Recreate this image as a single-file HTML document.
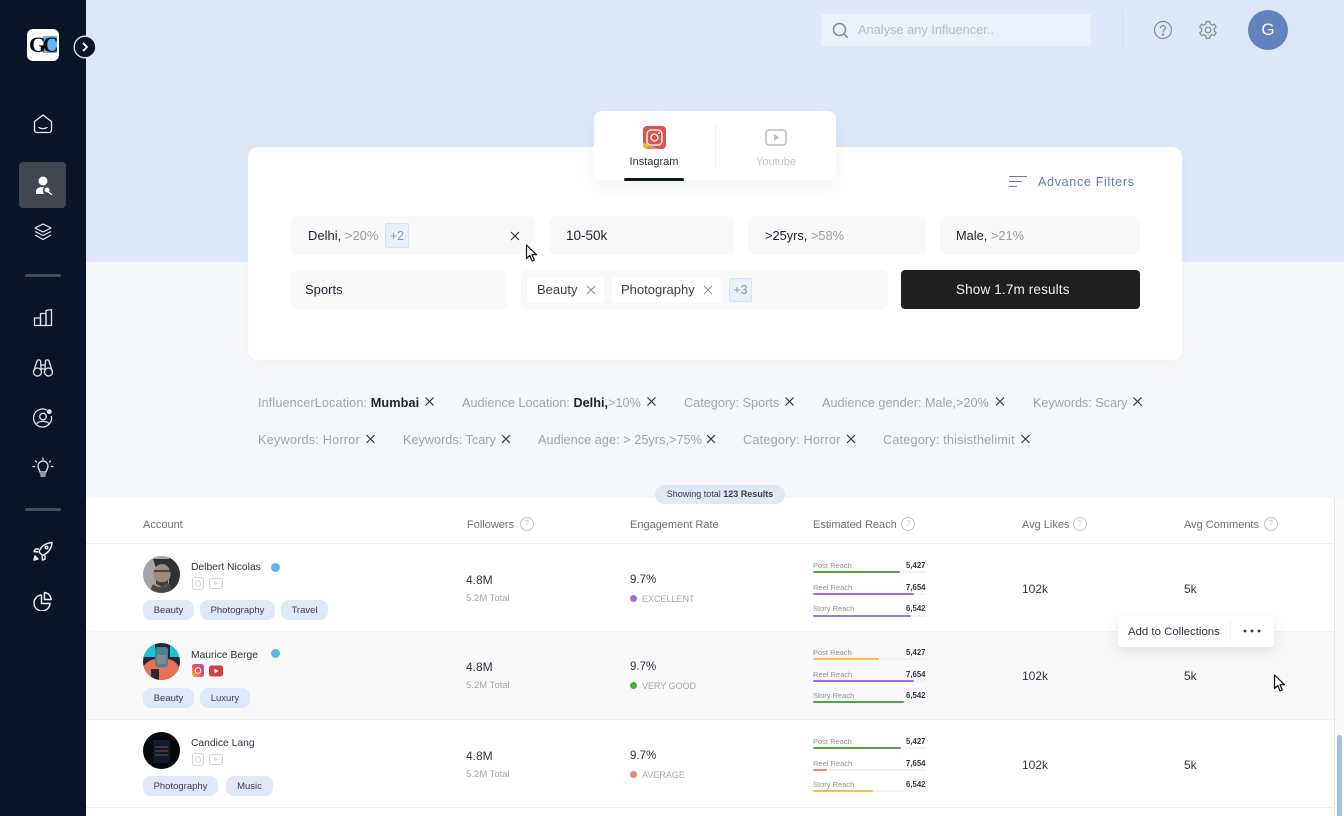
<!DOCTYPE html>
<html><head><meta charset="utf-8">
<style>
html,body{margin:0;padding:0;width:1344px;height:816px;overflow:hidden;background:#f6f7fa}
body{position:relative;font-family:"Liberation Sans",sans-serif;color:#2b303b}
div,svg{position:absolute}
.t{position:absolute;white-space:nowrap;line-height:16px}
.f{background:#f9f9f9;border-radius:6px}
.tag{position:absolute;background:#dde8f8;border-radius:8px;height:20px;line-height:22px;font-size:9.5px;text-align:center;color:#3c4250}
.th{font-size:11px;color:#6d717a;transform:translateY(1px)}
.v{font-size:12px;color:#2f3440}
.p{font-size:11.5px;color:#2f3440;transform:translateY(1px)}
.s{font-size:9.5px;color:#a5a8ae;transform:translateY(1px)}
.e{font-size:9px;color:#a5a8ae}
.rl{font-size:7.5px;color:#8f9299;transform:translateY(1px)}
.rv{font-size:7.8px;font-weight:bold;color:#2f3440;transform:translateY(1px)}
.tr{position:absolute;left:813px;width:113px;height:2px;background:#f1f2f4;border-radius:1px}
.tr i{display:block;height:2px;border-radius:1px}
.fl{font-size:12.7px;color:#a2a5ab;transform:translateY(1px)}
.fl b{font-weight:bold;color:#1d2230}
.n{font-size:10.3px;color:#2f3440;transform:translateY(1px)}
.m{font-size:13px;color:#1d2230}
</style></head><body>

<div style="left:0;top:0;width:1344px;height:262px;background:#dce8f8"></div>
<div style="left:86px;top:262px;width:1258px;height:236px;background:#f6f7fa"></div>
<div style="left:86px;top:498px;width:1248px;height:318px;background:#fff"></div>
<div style="left:86px;top:632px;width:1248px;height:87px;background:#f9f9fa"></div>
<div style="left:86px;top:543px;width:1248px;height:1px;background:#eeeff2"></div>
<div style="left:86px;top:631px;width:1248px;height:1px;background:#f0f1f3"></div>
<div style="left:86px;top:719px;width:1248px;height:1px;background:#eeeff2"></div>
<div style="left:86px;top:807px;width:1248px;height:1px;background:#eeeff2"></div>
<div style="left:1334px;top:498px;width:10px;height:318px;background:#f9fafc;border-left:1px solid #e6e8ec;box-sizing:border-box"></div>
<div style="left:1337px;top:735px;width:5px;height:81px;background:#a9bcdc;border-radius:3px 3px 0 0"></div>

<!-- Sidebar -->
<div style="left:0;top:0;width:86px;height:816px;background:#0a1628"></div>
<div style="left:27px;top:29px;width:32px;height:32px;background:#fff;border-radius:6px"></div>
<div style="left:43px;top:36px;width:14px;height:17px;background:#62b7ee"></div>
<div class="t" style="left:29px;top:34px;font-family:'Liberation Serif',serif;font-weight:bold;font-size:22px;line-height:22px;letter-spacing:-3.5px;color:#0a0a0a">GC</div>
<svg style="left:73px;top:35px" width="24" height="24" viewBox="0 0 24 24"><circle cx="12" cy="12" r="10.8" fill="#0a1628" stroke="#dce8f8" stroke-width="1.3"/><path d="M10.5 8.5l3.500 3.500-3.500 3.500" fill="none" stroke="#fff" stroke-width="1.8" stroke-linecap="round" stroke-linejoin="round"/></svg>
<svg style="left:31px;top:112px" width="24" height="24" viewBox="0 0 24 24" fill="none" stroke="#e8ebf0" stroke-width="1.3" stroke-linejoin="round" stroke-linecap="round"><path d="M12 3L3.500 9.500V18c0 1.500 1 2.500 2.500 2.500h12c1.500 0 2.500-1 2.500-2.500V9.500z" /><path d="M8 15.500c2 1.500 6 1.500 8 0"/></svg>
<div style="left:19px;top:162px;width:47px;height:46px;background:#41464f;border-radius:4px"></div>
<svg style="left:33px;top:175px" width="20" height="20" viewBox="0 0 20 20"><circle cx="10" cy="6" r="4.5" fill="#fff"/><path d="M3 19v-2.500C3 13.500 6 12 9 12c1 0 1.500 .2 2 .4-1.500 2-1.500 4.600 .2 6.600z" fill="#fff"/><circle cx="14" cy="15" r="2.5" fill="#fff"/><path d="M15.500 17l3 2.500" stroke="#fff" stroke-width="1.4" stroke-linecap="round"/></svg>
<svg style="left:33px;top:222px" width="20" height="20" viewBox="0 0 20 20" fill="none" stroke="#e8ebf0" stroke-width="1.2" stroke-linejoin="round"><path d="M10 2l8 4-8 4-8-4z"/><path d="M2 9.500l8 4 8-4"/><path d="M2 13l8 4.500 8-4.500"/></svg>
<div style="left:25px;top:274px;width:36px;height:3px;background:#464c56;border-radius:2px"></div>
<svg style="left:33px;top:307px" width="20" height="20" viewBox="0 0 20 20" fill="none" stroke="#dfe3ea" stroke-width="1.3" stroke-linejoin="round"><rect x="1.5" y="11" width="6" height="7.5"/><rect x="7.5" y="6.5" width="5.5" height="12"/><path d="M13 18.500V3.500l5.500-1v16z"/></svg>
<svg style="left:32px;top:358px" width="22" height="20" viewBox="0 0 22 20" fill="none" stroke="#dfe3ea" stroke-width="1.3"><circle cx="5.5" cy="14" r="4"/><circle cx="16.5" cy="14" r="4"/><path d="M1.500 14L5 3c.5-1.500 3-1.500 3.500 0L9 11M20.500 14L17 3c-.5-1.500-3-1.500-3.500 0L13 11M9 7h4M9 11h4"/></svg>
<svg style="left:33px;top:408px" width="20" height="20" viewBox="0 0 20 20" fill="none" stroke="#dfe3ea" stroke-width="1.3"><path d="M14 2.200A9 9 0 1 0 18.300 8"/><circle cx="10" cy="8.5" r="3.3"/><path d="M3.800 16c1.500-3.500 10.500-3.500 12.400 0"/><circle cx="16.3" cy="3.7" r="1.8" fill="#dfe3ea"/></svg>
<svg style="left:32px;top:457px" width="22" height="22" viewBox="0 0 22 22" fill="none" stroke="#e3e6ec" stroke-width="1.3" stroke-linecap="round"><path d="M8 15c0-2-2-3-2-6a5 5 0 0 1 10 0c0 3-2 4-2 6z"/><path d="M8.500 17h5M9 19h4M11 1v1.500M3.500 4l1 1M18.500 4l-1 1M1 9.500h1.500M19.500 9.500H21"/></svg>
<div style="left:25px;top:508px;width:36px;height:3px;background:#464c56;border-radius:2px"></div>
<svg style="left:33px;top:541px" width="20" height="20" viewBox="0 0 20 20" fill="none" stroke="#e8ebf0" stroke-width="1.5" stroke-linejoin="round"><path d="M6 11C8 5 13 2 19 1.500 18.500 7 15.500 12 9.500 14.500z"/><path d="M6 8H2.500L1 10.500l4 .5M12 14.500V18l-2.500 1-.5-4"/><circle cx="13.5" cy="6.5" r="1.3"/><path d="M2 15l3 3-4 1z" fill="#e8ebf0"/></svg>
<svg style="left:33px;top:591px" width="20" height="20" viewBox="0 0 20 20" fill="none" stroke="#e8ebf0" stroke-width="1.5" stroke-linejoin="round"><path d="M8.500 4A8 8 0 1 0 17 12.500H8.500z"/><path d="M11.500 1.500c3.500 .3 6.300 3 6.700 7h-6.700z"/></svg>

<!-- Top bar -->
<div style="left:820px;top:13px;width:272px;height:34px;box-sizing:border-box;background:#ebf1fb;border:1px solid #dfe6f1;border-radius:4px"></div>
<svg style="left:830px;top:20px" width="20" height="20" viewBox="0 0 20 20" fill="none" stroke="#858a92" stroke-width="1.5" stroke-linecap="round"><circle cx="9.5" cy="9.5" r="6"/><path d="M14 14l3.500 3.500"/></svg>
<div class="t" style="left:858px;top:22px;font-size:12.8px;color:#b6bbc4">Analyse any Influencer..</div>
<div style="left:1122px;top:10px;width:1px;height:40px;background:#d2dded"></div>
<svg style="left:1153px;top:20px" width="20" height="20" viewBox="0 0 20 20" fill="none" stroke="#8a8c90" stroke-width="1.2"><circle cx="10" cy="10" r="8.5"/><path d="M7.500 8c0-3.300 5-3.300 5 0 0 2-2.500 2-2.500 4" stroke-linecap="round"/><circle cx="10" cy="14.7" r=".6" fill="#8a8c90"/></svg>
<svg style="left:1198px;top:20px" width="20" height="20" viewBox="0 0 20 20" fill="none" stroke="#8a8c90" stroke-width="1.2" stroke-linejoin="round"><circle cx="10" cy="10" r="2.8"/><path d="M8.300 1.500h3.400l.5 2.500 1.800 1 2.400-.8 1.700 3-1.900 1.600v2.200l1.900 1.700-1.700 2.900-2.400-.8-1.800 1.100-.5 2.500H8.300l-.5-2.500-1.900-1.100-2.400.8-1.700-2.900L3.700 11.100V8.900L1.800 7.200l1.700-3 2.400.8 1.900-1z"/></svg>
<div style="left:1248px;top:10px;width:40px;height:40px;border-radius:50%;background:#6282bd"></div>
<div class="t" style="left:1248px;top:22px;width:40px;text-align:center;font-size:17px;color:#fff">G</div>

<!-- Filter card -->
<div style="left:248px;top:147px;width:934px;height:213px;background:#fff;border-radius:10px;box-shadow:0 4px 14px rgba(170,180,200,.08)"></div>
<div style="left:594px;top:111px;width:242px;height:69px;background:#fff;border-radius:8px;box-shadow:0 8px 18px rgba(120,130,150,.09)"></div>
<div style="left:715px;top:123px;width:1px;height:47px;background:#f1f2f3"></div>
<div style="left:624px;top:178px;width:60px;height:2.5px;background:#0a1628;border-radius:2px"></div>
<svg style="left:643px;top:126px" width="23" height="23" viewBox="0 0 23 23"><rect width="23" height="23" rx="4" fill="#d9534f"/><path d="M0 16L16 23H4a4 4 0 0 1-4-4z" fill="#ef8b52"/><circle cx="2.5" cy="20" r="2.5" fill="#f6bd3c"/><rect x="4" y="4" width="15" height="15" rx="4" fill="none" stroke="#f8e6e0" stroke-width="1.6"/><circle cx="11.5" cy="11.5" r="3.5" fill="none" stroke="#f8e6e0" stroke-width="1.6"/><circle cx="16" cy="7" r="1" fill="#f8e6e0"/></svg>
<svg style="left:765px;top:129px" width="22" height="17" viewBox="0 0 22 17"><rect x="1" y="1" width="20" height="15" rx="3" fill="none" stroke="#b9bcc1" stroke-width="1.5"/><path d="M9 5l5.500 3.500L9 12z" fill="#b9bcc1"/></svg>
<div class="t" style="left:594px;width:120px;top:154px;text-align:center;font-size:11px;color:#2b303b">Instagram</div>
<div class="t" style="left:716px;width:120px;top:154px;text-align:center;font-size:11px;color:#c2c4c9">Youtube</div>
<svg style="left:1009px;top:175px" width="18" height="13" viewBox="0 0 18 13" stroke="#5f7dbb" stroke-width="1"><path d="M0 1.500h18M0 6.500h13M0 11.500h8"/></svg>
<div class="t" style="left:1038px;top:174px;font-size:12.5px;letter-spacing:.7px;color:#5f7dbb">Advance Filters</div>

<div class="f" style="left:291px;top:216px;width:244px;height:39px"></div>
<div class="f" style="left:549px;top:216px;width:185px;height:39px"></div>
<div class="f" style="left:748px;top:216px;width:178px;height:39px"></div>
<div class="f" style="left:940px;top:216px;width:200px;height:39px"></div>
<div class="f" style="left:291px;top:270px;width:216px;height:39px"></div>
<div class="f" style="left:521px;top:270px;width:367px;height:39px"></div>
<div style="left:901px;top:270px;width:239px;height:39px;background:#1f1f1f;border-radius:4px"></div>
<div class="t" style="left:956px;top:282px;font-size:13.5px;letter-spacing:.15px;color:#f3f3f3">Show 1.7m results</div>

<div class="t m" style="left:308px;top:228px">Delhi, <span style="color:#9a9ea5">&gt;20%</span></div>
<div style="left:385px;top:223px;width:24px;height:25px;box-sizing:border-box;background:#e9f0fb;border:1px solid #d5e3f8;border-radius:2px"></div>
<div class="t" style="left:385px;width:24px;text-align:center;top:228px;font-size:12.5px;color:#93979e">+2</div>
<svg style="left:510px;top:231px" width="10" height="10" stroke="#2b303b" stroke-width="1.2"><path d="M1 1l8 8M9 1l-8 8"/></svg>
<div class="t m" style="left:566px;top:228px;font-size:13.5px">10-50k</div>
<div class="t m" style="left:765px;top:228px;font-size:12.8px">&gt;25yrs, <span style="color:#9a9ea5">&gt;58%</span></div>
<div class="t m" style="left:956px;top:228px;font-size:12.8px">Male, <span style="color:#9a9ea5">&gt;21%</span></div>
<div class="t m" style="left:305px;top:282px">Sports</div>
<div style="left:527px;top:277px;width:77px;height:26px;background:#fff;border-radius:3px"></div>
<div class="t m" style="left:537px;top:282px;color:#3a3f4a">Beauty</div>
<svg style="left:586px;top:285px" width="10" height="10" stroke="#8b8e94" stroke-width="1"><path d="M1 1l8 8M9 1l-8 8"/></svg>
<div style="left:612px;top:277px;width:109px;height:26px;background:#fff;border-radius:3px"></div>
<div class="t m" style="left:621px;top:282px;color:#3a3f4a">Photography</div>
<svg style="left:703px;top:285px" width="10" height="10" stroke="#8b8e94" stroke-width="1"><path d="M1 1l8 8M9 1l-8 8"/></svg>
<div style="left:729px;top:278px;width:23px;height:24px;box-sizing:border-box;background:#e9f0fb;border:1px solid #d5e3f8;border-radius:2px"></div>
<div class="t" style="left:729px;width:23px;text-align:center;top:282px;font-size:12.5px;color:#93979e">+3</div>

<!-- cursor 1 -->
<svg style="left:525px;top:244px" width="14" height="19" viewBox="0 0 14 19"><path d="M1.500 1v13.500l3.300-3 2.200 5.500 2.300-1-2.300-5.300h4.500z" fill="#fff" stroke="#111" stroke-width="1.2" stroke-linejoin="round"/></svg>

<!-- Applied filters -->
<div class="t fl" style="left:258px;top:394px;letter-spacing:.1px">InfluencerLocation: <b>Mumbai</b></div>
<div class="t fl" style="left:462px;top:394px">Audience Location: <b>Delhi,</b>&gt;10%</div>
<div class="t fl" style="left:684px;top:394px">Category: Sports</div>
<div class="t fl" style="left:822px;top:394px">Audience gender: Male,&gt;20%</div>
<div class="t fl" style="left:1033px;top:394px;letter-spacing:-.05px">Keywords: Scary</div>
<div class="t fl" style="left:258px;top:431px;letter-spacing:.2px">Keywords: Horror</div>
<div class="t fl" style="left:403px;top:431px">Keywords: Tcary</div>
<div class="t fl" style="left:538px;top:431px;letter-spacing:.04px">Audience age: &gt; 25yrs,&gt;75%</div>
<div class="t fl" style="left:743px;top:431px;letter-spacing:.2px">Category: Horror</div>
<div class="t fl" style="left:883px;top:431px;letter-spacing:.17px">Category: thisisthelimit</div>
<svg style="left:0;top:0" width="1344" height="816" fill="none" stroke="#30353f" stroke-width="1.2">
<path d="M425.500 397.500l8 8M433.500 397.500l-8 8"/>
<path d="M647.500 397.500l8 8M655.500 397.500l-8 8"/>
<path d="M785.500 397.500l8 8M793.500 397.500l-8 8"/>
<path d="M996 397.500l8 8M1004 397.500l-8 8"/>
<path d="M1133.500 397.500l8 8M1141.500 397.500l-8 8"/>
<path d="M366.500 435l8 8M374.500 435l-8 8"/>
<path d="M502 435l8 8M510 435l-8 8"/>
<path d="M707 435l8 8M715 435l-8 8"/>
<path d="M847 435l8 8M855 435l-8 8"/>
<path d="M1021.500 435l8 8M1029.500 435l-8 8"/>
</svg>

<!-- Results badge -->
<div style="left:655px;top:485px;width:130px;height:19px;background:#dde8f8;border-radius:10px"></div>
<div class="t" style="left:655px;width:130px;text-align:center;top:487px;font-size:9px;color:#3a3f4a;line-height:15px">Showing total <b>123 Results</b></div>

<!-- Header -->
<div class="t th" style="left:143px;top:516px">Account</div>
<div class="t th" style="left:467px;top:516px">Followers</div>
<div class="t th" style="left:630px;top:516px">Engagement Rate</div>
<div class="t th" style="left:813px;top:516px">Estimated Reach</div>
<div class="t th" style="left:1022px;top:516px">Avg Likes</div>
<div class="t th" style="left:1184px;top:516px">Avg Comments</div>
<svg style="left:0;top:0" width="1344" height="816" fill="none" stroke="#c4c6cb" stroke-width="1">
<circle cx="527" cy="524" r="6.5"/><circle cx="908" cy="524" r="6.5"/><circle cx="1080" cy="524" r="6.5"/><circle cx="1271" cy="524" r="6.5"/>
</svg>
<div class="t" style="left:520px;width:14px;text-align:center;top:516px;font-size:8px;color:#c4c6cb">?</div>
<div class="t" style="left:901px;width:14px;text-align:center;top:516px;font-size:8px;color:#c4c6cb">?</div>
<div class="t" style="left:1073px;width:14px;text-align:center;top:516px;font-size:8px;color:#c4c6cb">?</div>
<div class="t" style="left:1264px;width:14px;text-align:center;top:516px;font-size:8px;color:#c4c6cb">?</div>

<!-- Row 1 -->
<svg style="left:143px;top:556px" width="37" height="37" viewBox="0 0 37 37"><defs><clipPath id="c1"><circle cx="18.5" cy="18.5" r="18.5"/></clipPath></defs><g clip-path="url(#c1)"><rect width="37" height="37" fill="#a5a5a5"/><rect x="26" width="11" height="37" fill="#2f3338"/><path d="M10 3h20v8l-3 3-14-2z" fill="#2e3135"/><ellipse cx="19" cy="18" rx="8.5" ry="10" fill="#9a8a80"/><path d="M10 28c4 4 12 4 16-1l4 10H6z" fill="#4a4746"/><path d="M11 15h16" stroke="#222" stroke-width="1.2"/><path d="M13 24c3 3 9 3 12 0v4l-6 3-6-3z" fill="#433c38"/></g></svg>
<div class="t n" style="left:191px;top:559px">Delbert Nicolas</div>
<div style="left:271px;top:563px;width:9px;height:9px;border-radius:50%;background:#5db4ef"></div>
<svg style="left:192px;top:577px" width="32" height="13" viewBox="0 0 32 13" fill="none" stroke="#d3d5d9" stroke-width="1"><rect x=".5" y=".5" width="11" height="12" rx="2.5"/><circle cx="6" cy="6.5" r="2.7"/><rect x="17.5" y="1.5" width="13" height="10" rx="2.5"/><path d="M22.500 4.500l3.500 2-3.500 2z" fill="#d3d5d9" stroke="none"/></svg>
<div class="tag" style="left:143px;top:600px;width:51px">Beauty</div>
<div class="tag" style="left:200px;top:600px;width:75px">Photography</div>
<div class="tag" style="left:281px;top:600px;width:47px">Travel</div>
<div class="t v" style="left:466px;top:572px">4.8M</div>
<div class="t s" style="left:466px;top:590px">5.2M Total</div>
<div class="t p" style="left:630px;top:571px">9.7%</div>
<div style="left:630px;top:595px;width:7px;height:7px;border-radius:50%;background:#9c6ee8"></div>
<div class="t e" style="left:642px;top:591px">EXCELLENT</div>
<div class="t rl" style="left:813px;top:557px">Post Reach</div><div class="t rv" style="left:906px;top:557px">5,427</div>
<div class="tr" style="top:571px"><i style="width:87px;background:#46b036"></i></div>
<div class="t rl" style="left:813px;top:579px">Reel Reach</div><div class="t rv" style="left:906px;top:579px">7,654</div>
<div class="tr" style="top:593px"><i style="width:101px;background:#9c6ee8"></i></div>
<div class="t rl" style="left:813px;top:600px">Story Reach</div><div class="t rv" style="left:906px;top:600px">6,542</div>
<div class="tr" style="top:615px"><i style="width:98px;background:#8d7fe0"></i></div>
<div class="t v" style="left:1022px;top:581px">102k</div>
<div class="t v" style="left:1184px;top:581px">5k</div>

<!-- Row 2 -->
<svg style="left:143px;top:643px" width="37" height="37" viewBox="0 0 37 37"><defs><clipPath id="c2"><circle cx="18.5" cy="18.5" r="18.5"/></clipPath></defs><g clip-path="url(#c2)"><rect width="37" height="37" fill="#1d2a33"/><path d="M0 0h12v14H0zM27 0h10v14H27z" fill="#18c4d8"/><path d="M0 24c5-7 10-8 13-8h11c5 0 10 3 13 10v11H0z" fill="#e96f55"/><rect x="12" y="4" width="13" height="20" rx="3" fill="#4d7f95"/><rect x="14" y="12" width="9" height="9" fill="#7d8a92"/><path d="M8 26h8v11H8z" fill="#2a2a30"/></g></svg>
<div class="t n" style="left:191px;top:647px">Maurice Berge</div>
<div style="left:271px;top:649px;width:9px;height:9px;border-radius:50%;background:#5db4ef"></div>
<svg style="left:192px;top:664px" width="32" height="14" viewBox="0 0 32 14"><defs><linearGradient id="ig" x1="0" y1="1" x2="1" y2="0"><stop offset="0" stop-color="#f9c23c"/><stop offset=".5" stop-color="#e5534b"/><stop offset="1" stop-color="#8a5cd6"/></linearGradient></defs><rect width="12" height="13" rx="2.5" fill="url(#ig)"/><circle cx="6" cy="6.5" r="2.8" fill="none" stroke="#fff" stroke-width="1"/><rect x="17" y="1.5" width="14" height="11" rx="2.5" fill="#cf3f3f"/><path d="M22.500 4.500l4 2.500-4 2.500z" fill="#fff"/></svg>
<div class="tag" style="left:143px;top:688px;width:51px">Beauty</div>
<div class="tag" style="left:200px;top:688px;width:50px">Luxury</div>
<div class="t v" style="left:466px;top:659px">4.8M</div>
<div class="t s" style="left:466px;top:677px">5.2M Total</div>
<div class="t p" style="left:630px;top:658px">9.7%</div>
<div style="left:630px;top:682px;width:7px;height:7px;border-radius:50%;background:#46b036"></div>
<div class="t e" style="left:642px;top:678px">VERY GOOD</div>
<div class="t rl" style="left:813px;top:644px">Post Reach</div><div class="t rv" style="left:906px;top:644px">5,427</div>
<div class="tr" style="top:658px"><i style="width:66px;background:#fbbf3a"></i></div>
<div class="t rl" style="left:813px;top:666px">Reel Reach</div><div class="t rv" style="left:906px;top:666px">7,654</div>
<div class="tr" style="top:680px"><i style="width:101px;background:#9c6ee8"></i></div>
<div class="t rl" style="left:813px;top:687px">Story Reach</div><div class="t rv" style="left:906px;top:687px">6,542</div>
<div class="tr" style="top:701px"><i style="width:91px;background:#46b036"></i></div>
<div class="t v" style="left:1022px;top:668px">102k</div>
<div class="t v" style="left:1184px;top:668px">5k</div>

<!-- Row 3 -->
<svg style="left:143px;top:732px" width="37" height="37" viewBox="0 0 37 37"><circle cx="18.5" cy="18.5" r="18.5" fill="#05070b"/><rect x="10" y="8" width="17" height="23" fill="#0f1b2c"/><path d="M12 15h13M12 19h13M12 23h13" stroke="#5a3b42" stroke-width="1.5"/></svg>
<div class="t n" style="left:191px;top:735px">Candice Lang</div>
<svg style="left:192px;top:753px" width="32" height="13" viewBox="0 0 32 13" fill="none" stroke="#d3d5d9" stroke-width="1"><rect x=".5" y=".5" width="11" height="12" rx="2.5"/><circle cx="6" cy="6.5" r="2.7"/><rect x="17.5" y="1.5" width="13" height="10" rx="2.5"/><path d="M22.500 4.500l3.500 2-3.500 2z" fill="#d3d5d9" stroke="none"/></svg>
<div class="tag" style="left:143px;top:776px;width:75px">Photography</div>
<div class="tag" style="left:226px;top:776px;width:47px">Music</div>
<div class="t v" style="left:466px;top:748px">4.8M</div>
<div class="t s" style="left:466px;top:766px">5.2M Total</div>
<div class="t p" style="left:630px;top:747px">9.7%</div>
<div style="left:630px;top:771px;width:7px;height:7px;border-radius:50%;background:#ed8a6d"></div>
<div class="t e" style="left:642px;top:767px">AVERAGE</div>
<div class="t rl" style="left:813px;top:733px">Post Reach</div><div class="t rv" style="left:906px;top:733px">5,427</div>
<div class="tr" style="top:747px"><i style="width:88px;background:#46b036"></i></div>
<div class="t rl" style="left:813px;top:755px">Reel Reach</div><div class="t rv" style="left:906px;top:755px">7,654</div>
<div class="tr" style="top:769px"><i style="width:14px;background:#ed8a6d"></i></div>
<div class="t rl" style="left:813px;top:776px">Story Reach</div><div class="t rv" style="left:906px;top:776px">6,542</div>
<div class="tr" style="top:790px"><i style="width:60px;background:#fbbf3a"></i></div>
<div class="t v" style="left:1022px;top:757px">102k</div>
<div class="t v" style="left:1184px;top:757px">5k</div>

<!-- Hover popup -->
<div style="left:1118px;top:616px;width:156px;height:31px;background:#fff;border-radius:4px;box-shadow:0 5px 12px rgba(120,130,150,.18)"></div>
<div class="t" style="left:1128px;top:624px;font-size:11.4px;color:#2f3440">Add to Collections</div>
<div style="left:1230px;top:621px;width:1px;height:20px;background:#eceded"></div>
<svg style="left:1242px;top:628px" width="20" height="6"><circle cx="3" cy="3" r="1.4" fill="#2b303b"/><circle cx="10" cy="3" r="1.4" fill="#2b303b"/><circle cx="17" cy="3" r="1.4" fill="#2b303b"/></svg>
<svg style="left:1273px;top:674px" width="14" height="19" viewBox="0 0 14 19"><path d="M1.500 1v13.500l3.300-3 2.200 5.500 2.300-1-2.300-5.300h4.500z" fill="#fff" stroke="#111" stroke-width="1.2" stroke-linejoin="round"/></svg>

</body></html>
